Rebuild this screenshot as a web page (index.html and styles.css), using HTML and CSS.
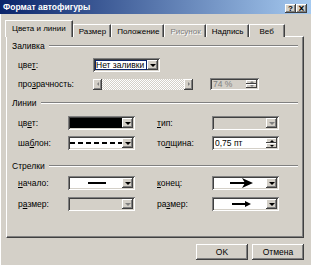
FILE: index.html
```html
<!DOCTYPE html>
<html>
<head>
    <meta charset="utf-8">
    <title>Формат автофигуры</title>
    <link rel="stylesheet" href="styles.css">
</head>
<body>
<div class="window">
    <div class="titlebar">
        <span class="title">Формат автофигуры</span>
        <div class="caption">
            <span class="cbtn">?</span>
            <span class="cbtn close">×</span>
        </div>
    </div>

    <div class="tabs">
        <div class="tab active">Цвета и линии</div>
        <div class="tab">Размер</div>
        <div class="tab">Положение</div>
        <div class="tab disabled">Рисунок</div>
        <div class="tab">Надпись</div>
        <div class="tab web">Веб</div>
    </div>

    <div class="panel">
        <!-- Заливка -->
        <div class="group"><span>Заливка</span></div>
        <div class="fill-grid">
            <label>цве<u>т</u>:</label>
            <div class="combo fill-combo">
                <div class="value focus">Нет заливки</div>
                <span class="drop"></span>
            </div>

            <label>про<u>з</u>рачность:</label>
            <div class="transp">
                <div class="slider">
                    <span class="sbtn left"></span>
                    <span class="track"></span>
                    <span class="sbtn right"></span>
                </div>
                <div class="spin off">
                    <div class="value">74 %</div>
                    <span class="spin-btns"><i class="up"></i><i class="down"></i></span>
                </div>
            </div>
        </div>

        <!-- Линии -->
        <div class="group lines-title"><span>Линии</span></div>
        <div class="grid lines-grid">
            <label>цв<u>е</u>т:</label>
            <div class="combo">
                <div class="value"><span class="swatch"></span></div>
                <span class="drop"></span>
            </div>
            <label class="right"><u>т</u>ип:</label>
            <div class="combo off">
                <div class="value"></div>
                <span class="drop"></span>
            </div>

            <label>ша<u>б</u>лон:</label>
            <div class="combo">
                <div class="value">
                    <svg width="54" height="12"><line x1="0" y1="6" x2="54" y2="6" stroke="#000" stroke-width="2" stroke-dasharray="5 3"/></svg>
                </div>
                <span class="drop"></span>
            </div>
            <label class="right">то<u>л</u>щина:</label>
            <div class="spin">
                <div class="value">0,75 пт</div>
                <span class="spin-btns"><i class="up"></i><i class="down"></i></span>
            </div>
        </div>

        <!-- Стрелки -->
        <div class="group arrows-title"><span>Стрелки</span></div>
        <div class="grid arrows-grid">
            <label><u>н</u>ачало:</label>
            <div class="combo">
                <div class="value">
                    <svg width="54" height="12"><line x1="18" y1="6" x2="36" y2="6" stroke="#000" stroke-width="2"/></svg>
                </div>
                <span class="drop"></span>
            </div>
            <label class="right"><u>к</u>онец:</label>
            <div class="combo">
                <div class="value">
                    <svg width="54" height="12"><line x1="16" y1="6" x2="32" y2="6" stroke="#000" stroke-width="2"/><path d="M28 1 L39 6 L28 11 L31 6 Z" fill="#000"/></svg>
                </div>
                <span class="drop"></span>
            </div>

            <label>р<u>а</u>змер:</label>
            <div class="combo off">
                <div class="value"></div>
                <span class="drop"></span>
            </div>
            <label class="right">ра<u>з</u>мер:</label>
            <div class="combo">
                <div class="value">
                    <svg width="54" height="12"><line x1="18" y1="6" x2="33" y2="6" stroke="#000" stroke-width="2"/><path d="M31 3 L37 6 L31 9 Z" fill="#000"/></svg>
                </div>
                <span class="drop"></span>
            </div>
        </div>
    </div>

    <div class="footer">
        <button class="btn">OK</button>
        <button class="btn">Отмена</button>
    </div>
</div>
</body>
</html>
```

FILE: styles.css
```css
body {
    margin: 0;
    font-family: "Liberation Sans", Arial, sans-serif;
    font-size: 8.5px;
    color: #000;
}

.window {
    width: 311px;
    height: 265px;
    background: #d4d0c8;
    box-shadow: inset 1px 0 #fff;
    overflow: hidden;
}

.titlebar {
    height: 14px;
    display: flex;
    align-items: center;
    justify-content: space-between;
    padding: 0 4px 0 3px;
    background: linear-gradient(to right, #0a246a, #a6caf0);
}

.title {
    color: #fff;
    font-weight: bold;
    font-size: 8.5px;
}

.caption {
    display: flex;
    margin-top: 2px;
}

.cbtn {
    width: 11px;
    height: 9px;
    background: #d4d0c8;
    box-shadow: inset -1px -1px #404040, inset 1px 1px #fff, inset -2px -2px #808080;
    font-size: 8px;
    font-weight: bold;
    line-height: 9px;
    text-align: center;
}

.cbtn.close {
    font-size: 10px;
}

/* вкладки */
.tabs {
    display: flex;
    align-items: flex-end;
    height: 17px;
    margin-top: 6px;
    margin-bottom: -1px;
    padding-left: 5px;
    position: relative;
    z-index: 1;
    font-size: 8px;
}

.tab {
    height: 13px;
    line-height: 13px;
    padding: 0 4px 0 5px;
    background: #d4d0c8;
    border-top: 1px solid #fff;
    border-left: 1px solid #fff;
    border-right: 1px solid #404040;
    box-shadow: inset -1px 0 #808080;
    box-sizing: border-box;
    white-space: nowrap;
}

.tab.active {
    height: 17px;
    line-height: 15px;
    padding: 0 6px;
}

.tab.web {
    padding: 0 10px;
}

.tab.disabled {
    color: #808080;
    text-shadow: 1px 1px #fff;
}

.panel {
    height: 202px;
    margin: 0 7px 0 6px;
    box-sizing: border-box;
    border-top: 1px solid #fff;
    border-left: 1px solid #fff;
    border-right: 1px solid #404040;
    border-bottom: 1px solid #404040;
    box-shadow: inset -1px -1px #808080;
    padding: 4px 5px 0;
}

.group {
    display: flex;
    align-items: center;
    height: 10px;
}

.group::after {
    content: "";
    flex: 1;
    margin-left: 4px;
    border-top: 1px solid #808080;
    border-bottom: 1px solid #fff;
}

.fill-grid {
    display: grid;
    grid-template-columns: 75px auto;
    grid-template-rows: 12px 12px;
    row-gap: 7px;
    align-items: center;
    margin-top: 8px;
    padding-left: 6px;
}

.fill-combo {
    width: 67px;
    height: 12px;
}

.transp {
    display: flex;
    align-items: center;
    gap: 17px;
}

.slider {
    display: flex;
    width: 100px;
    height: 11px;
}

.track {
    flex: 1;
    background: repeating-conic-gradient(#fff 0 25%, #d4d0c8 0 50%) 0 0 / 2px 2px;
}

.sbtn {
    width: 9px;
    background: #d4d0c8;
    box-shadow: inset -1px -1px #404040, inset 1px 1px #fff, inset -2px -2px #808080;
    display: flex;
    align-items: center;
    justify-content: center;
}

.sbtn::before {
    content: "";
    border: 2px solid transparent;
}

.sbtn.left::before {
    border-right-color: #808080;
    margin-left: -2px;
}

.sbtn.right::before {
    border-left-color: #808080;
    margin-right: -2px;
}

.lines-title {
    margin-top: 8px;
}

.arrows-title {
    margin-top: 11px;
}

.grid {
    display: grid;
    grid-template-columns: 50px 67px 77px 67px;
    grid-template-rows: 14px 14px;
    align-items: center;
    padding-left: 6px;
}

.grid .right {
    margin-left: 22px;
}

.lines-grid {
    margin-top: 8px;
    row-gap: 6px;
}

.arrows-grid {
    margin-top: 5px;
    row-gap: 7px;
}

/* поля */
.combo,
.spin {
    display: flex;
    height: 14px;
    box-sizing: border-box;
    padding: 2px;
    background: #fff;
    box-shadow: inset 1px 1px #808080, inset -1px -1px #fff, inset 2px 2px #404040, inset -2px -2px #d4d0c8;
}

.combo.off,
.spin.off {
    background: #d4d0c8;
}

.value {
    flex: 1;
    display: flex;
    align-items: center;
    justify-content: center;
    overflow: hidden;
    white-space: nowrap;
}

.value.focus {
    justify-content: flex-start;
    padding-left: 1px;
    outline: 1px solid #0a246a;
    outline-offset: -1px;
}

.spin .value {
    justify-content: flex-start;
    padding-left: 1px;
}

.spin.off .value {
    color: #808080;
}

.swatch {
    display: block;
    width: 100%;
    height: 100%;
    background: #000;
    box-shadow: 0 0 0 1px #fff;
}

.drop {
    width: 11px;
    background: #d4d0c8;
    box-shadow: inset -1px -1px #404040, inset 1px 1px #fff, inset -2px -2px #808080;
    display: flex;
    align-items: center;
    justify-content: center;
}

.drop::before {
    content: "";
    border: 3px solid transparent;
    border-top-color: #000;
    border-bottom: 0;
    margin-top: 1px;
}

.combo.off .drop::before {
    border-top-color: #808080;
}

.spin-btns {
    width: 11px;
    display: flex;
    flex-direction: column;
}

.spin-btns i {
    flex: 1;
    background: #d4d0c8;
    box-shadow: inset -1px -1px #404040, inset 1px 1px #fff;
    display: flex;
    align-items: center;
    justify-content: center;
}

.spin-btns i::before {
    content: "";
    border: 2px solid transparent;
}

.spin-btns .up::before {
    border-bottom-color: #000;
    border-top: 0;
}

.spin-btns .down::before {
    border-top-color: #000;
    border-bottom: 0;
}

.spin.off .spin-btns .up::before {
    border-bottom-color: #808080;
}

.spin.off .spin-btns .down::before {
    border-top-color: #808080;
}

.lines-grid .spin,
.lines-grid .combo,
.arrows-grid .combo {
    width: 67px;
}

.fill-grid .spin {
    width: 49px;
    height: 12px;
}

/* кнопки */
.footer {
    display: flex;
    justify-content: flex-end;
    gap: 4px;
    padding: 6px 7px 0 0;
}

.btn {
    width: 52px;
    height: 16px;
    padding: 0;
    border: 0;
    background: #d4d0c8;
    font: inherit;
    box-shadow: inset -1px -1px #404040, inset 1px 1px #fff, inset -2px -2px #808080;
}
```
